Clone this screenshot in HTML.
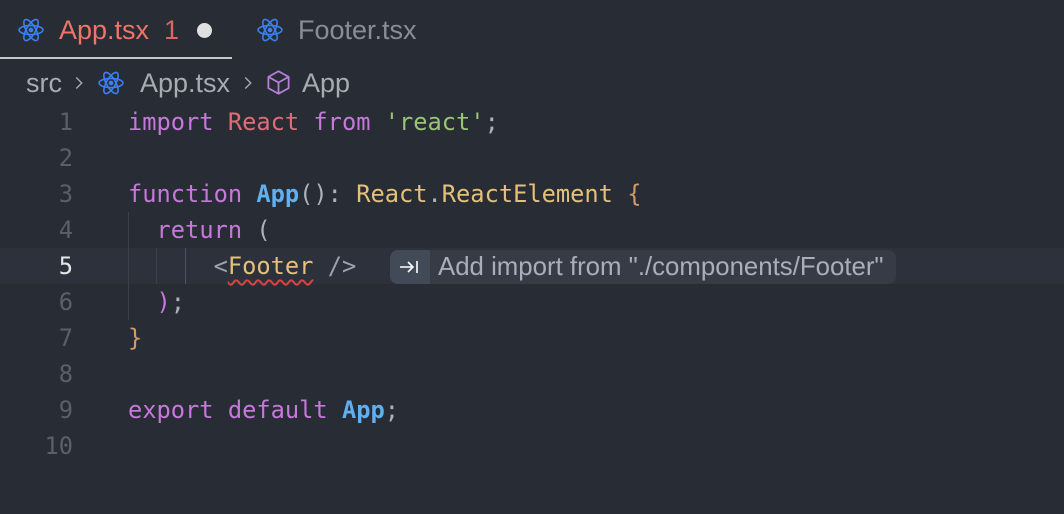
<!DOCTYPE html><html><head><style>
body{margin:0;width:1064px;height:514px;background:#282c34;overflow:hidden;font-family:"Liberation Sans",sans-serif;position:relative}
.tab{position:absolute;top:0;height:60px;line-height:60px;font-size:27px}
.ic{position:absolute}
.ul{position:absolute;left:0;top:57px;width:232px;height:2px;background:#c8c8c8}
.bc{position:absolute;top:66px;height:34px;line-height:34px;font-size:27px;color:#a8abb0}
.code{position:absolute;left:0;top:104px;width:1064px;font-family:"DejaVu Sans Mono",monospace;font-size:23.7px}
.ln{height:36px;line-height:36px;position:relative;white-space:pre;color:#abb2bf}
.ln .n{position:absolute;left:0;width:73px;text-align:right;color:#5a606b}
.ln .c{position:absolute;left:128px}
.k{color:#c678dd}.r{color:#e06c75}.s{color:#98c379}.f{color:#61afef;font-weight:bold}.y{color:#e5c07b}.o{color:#d19a66}.g{color:#9da3ad}
.guide{position:absolute;width:1px;background:#3b404a}
</style></head><body>
<svg class="ic" style="left:18px;top:17px" width="26" height="26" viewBox="-12 -12 24 24"><g fill="none" stroke="#3b7ff0" stroke-width="1.5"><ellipse rx="11" ry="4.2"/><ellipse rx="11" ry="4.2" transform="rotate(60)"/><ellipse rx="11" ry="4.2" transform="rotate(120)"/></g><circle r="2.2" fill="#3b7ff0"/></svg>
<div class="tab" style="left:59px;color:#f07468">App.tsx</div>
<div class="tab" style="left:164px;color:#d9685e">1</div>
<div style="position:absolute;left:197px;top:23px;width:15px;height:15px;border-radius:50%;background:#e0e0e0"></div>
<svg class="ic" style="left:257px;top:17px" width="26" height="26" viewBox="-12 -12 24 24"><g fill="none" stroke="#3b7ff0" stroke-width="1.5"><ellipse rx="11" ry="4.2"/><ellipse rx="11" ry="4.2" transform="rotate(60)"/><ellipse rx="11" ry="4.2" transform="rotate(120)"/></g><circle r="2.2" fill="#3b7ff0"/></svg>
<div class="tab" style="left:298px;color:#8a8d93">Footer.tsx</div>
<div class="ul"></div>
<div class="bc" style="left:26px">src</div>
<svg class="ic" style="left:68px;top:71px" width="22" height="24" viewBox="0 0 24 24"><path d="M9 6l6 6-6 6" fill="none" stroke="#a8abb0" stroke-width="1.5"/></svg>
<svg class="ic" style="left:98px;top:70px" width="26" height="26" viewBox="-12 -12 24 24"><g fill="none" stroke="#3b7ff0" stroke-width="1.5"><ellipse rx="11" ry="4.2"/><ellipse rx="11" ry="4.2" transform="rotate(60)"/><ellipse rx="11" ry="4.2" transform="rotate(120)"/></g><circle r="2.2" fill="#3b7ff0"/></svg>
<div class="bc" style="left:140px">App.tsx</div>
<svg class="ic" style="left:237px;top:71px" width="22" height="24" viewBox="0 0 24 24"><path d="M9 6l6 6-6 6" fill="none" stroke="#a8abb0" stroke-width="1.5"/></svg>
<svg class="ic" style="left:265px;top:69px" width="27" height="27" viewBox="0 0 24 24"><path d="M12 2l9 5v10l-9 5-9-5V7z M3 7l9 5 9-5 M12 12v10" fill="none" stroke="#b77fdc" stroke-width="1.6" stroke-linejoin="round"/></svg>
<div class="bc" style="left:302px">App</div>
<div class="code">
<div class="ln"><span class="n">1</span><span class="c"><span class="k">import</span> <span class="r">React</span> <span class="k">from</span> <span class="s">'react'</span>;</span></div>
<div class="ln"><span class="n">2</span></div>
<div class="ln"><span class="n">3</span><span class="c"><span class="k">function</span> <span class="f">App</span>(): <span class="y">React</span>.<span class="y">ReactElement</span> <span class="o">{</span></span></div>
<div class="ln"><span class="n">4</span><span class="c">  <span class="k">return</span> (</span></div>
<div class="ln" style="background:#2c313b"><span class="n" style="color:#e6e6e6">5</span><span class="c">      <span class="g">&lt;</span><span class="y" style="text-decoration:underline wavy #d8453e;text-underline-offset:5px;text-decoration-thickness:1.5px">Footer</span> <span class="g">/&gt;</span></span></div>
<div class="ln"><span class="n">6</span><span class="c">  <span class="k">)</span>;</span></div>
<div class="ln"><span class="n">7</span><span class="c"><span class="o">}</span></span></div>
<div class="ln"><span class="n">8</span></div>
<div class="ln"><span class="n">9</span><span class="c"><span class="k">export</span> <span class="k">default</span> <span class="f">App</span>;</span></div>
<div class="ln"><span class="n">10</span></div>
<div class="guide" style="left:128px;top:108px;height:108px"></div>
<div class="guide" style="left:156px;top:144px;height:36px"></div>
<div class="guide" style="left:185px;top:144px;height:36px;background:#4d5466"></div>
</div>
<div style="position:absolute;left:390px;top:250px;width:506px;height:34px;border-radius:8px;background:#363b45;overflow:hidden;display:flex;align-items:center">
<div style="width:40px;height:34px;background:#434a57;display:flex;align-items:center;justify-content:center"><svg width="22" height="18" viewBox="0 0 22 18"><path d="M1 9h13M9 4l5 5-5 5M18 3v12" fill="none" stroke="#fff" stroke-width="1.6"/></svg></div>
<span style="margin-left:8px;font-size:25.8px;color:#a9afba;white-space:nowrap">Add import from "./components/Footer"</span></div>
</body></html>
